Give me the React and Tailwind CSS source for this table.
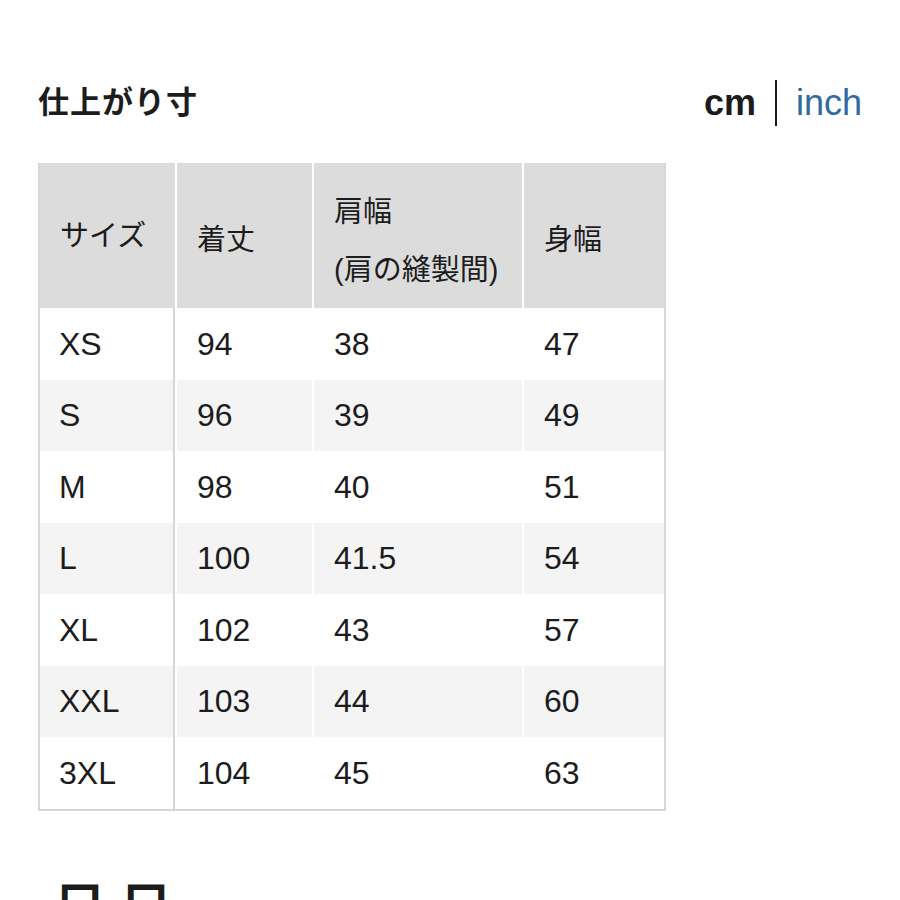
import React from 'react';

const rows = [
  ['XS', '94', '38', '47'],
  ['S', '96', '39', '49'],
  ['M', '98', '40', '51'],
  ['L', '100', '41.5', '54'],
  ['XL', '102', '43', '57'],
  ['XXL', '103', '44', '60'],
  ['3XL', '104', '45', '63'],
];

const font = { fontFamily: '"Liberation Sans", "Noto Sans CJK JP", sans-serif' };

export default function App() {
  return (
    <div className="w-[900px] h-[900px] overflow-hidden bg-white text-[#1c1c1c] pt-[78px] px-[38px]" style={font}>
      {/* Title row */}
      <div className="h-[50px] flex items-center justify-between">
        <h1 className="text-[31px] font-bold tracking-[1px]">仕上がり寸</h1>
        <div className="flex items-center">
          <span className="text-[36px] font-bold">cm</span>
          <span className="w-[2px] h-[46px] bg-[#1a1a1a] mx-[19px]" />
          <span className="text-[36px] text-[#2f6aa3]">inch</span>
        </div>
      </div>

      {/* Size table */}
      <div className="mt-[35px] w-[628px] border-2 border-t-0 border-[#d6d6d6] text-[32px]">
        <div className="grid grid-cols-[135px_135px_208px_1fr] gap-x-[2px] bg-white h-[145px] text-[29px]">
          <div className="bg-[#dcdcdc] flex items-center pl-[20px] pt-[2px]">サイズ</div>
          <div className="bg-[#dcdcdc] flex items-center pl-[20px] pt-[10px]">着丈</div>
          <div className="bg-[#dcdcdc] flex flex-col justify-center pl-[20px] pt-[10px] leading-[58px]">
            <span>肩幅</span>
            <span>(肩の縫製間)</span>
          </div>
          <div className="bg-[#dcdcdc] flex items-center pl-[20px] pt-[10px]">身幅</div>
        </div>
        {rows.map((r, i) => {
          const bg = i % 2 === 1 ? 'bg-[#f4f4f4]' : 'bg-white';
          return (
            <div key={r[0]} className="grid grid-cols-[135px_135px_208px_1fr] gap-x-[2px] bg-white h-[71.5px]">
              <div className={`${bg} flex items-center pl-[19px] border-r-2 border-[#d6d6d6]`}>{r[0]}</div>
              <div className={`${bg} flex items-center pl-[20px]`}>{r[1]}</div>
              <div className={`${bg} flex items-center pl-[20px]`}>{r[2]}</div>
              <div className={`${bg} flex items-center pl-[20px]`}>{r[3]}</div>
            </div>
          );
        })}
      </div>

      {/* Next section heading, cut off by the viewport */}
      <div className="mt-[69px] pl-[19px] text-[46px] font-bold tracking-[20px] leading-none">口口</div>
    </div>
  );
}
